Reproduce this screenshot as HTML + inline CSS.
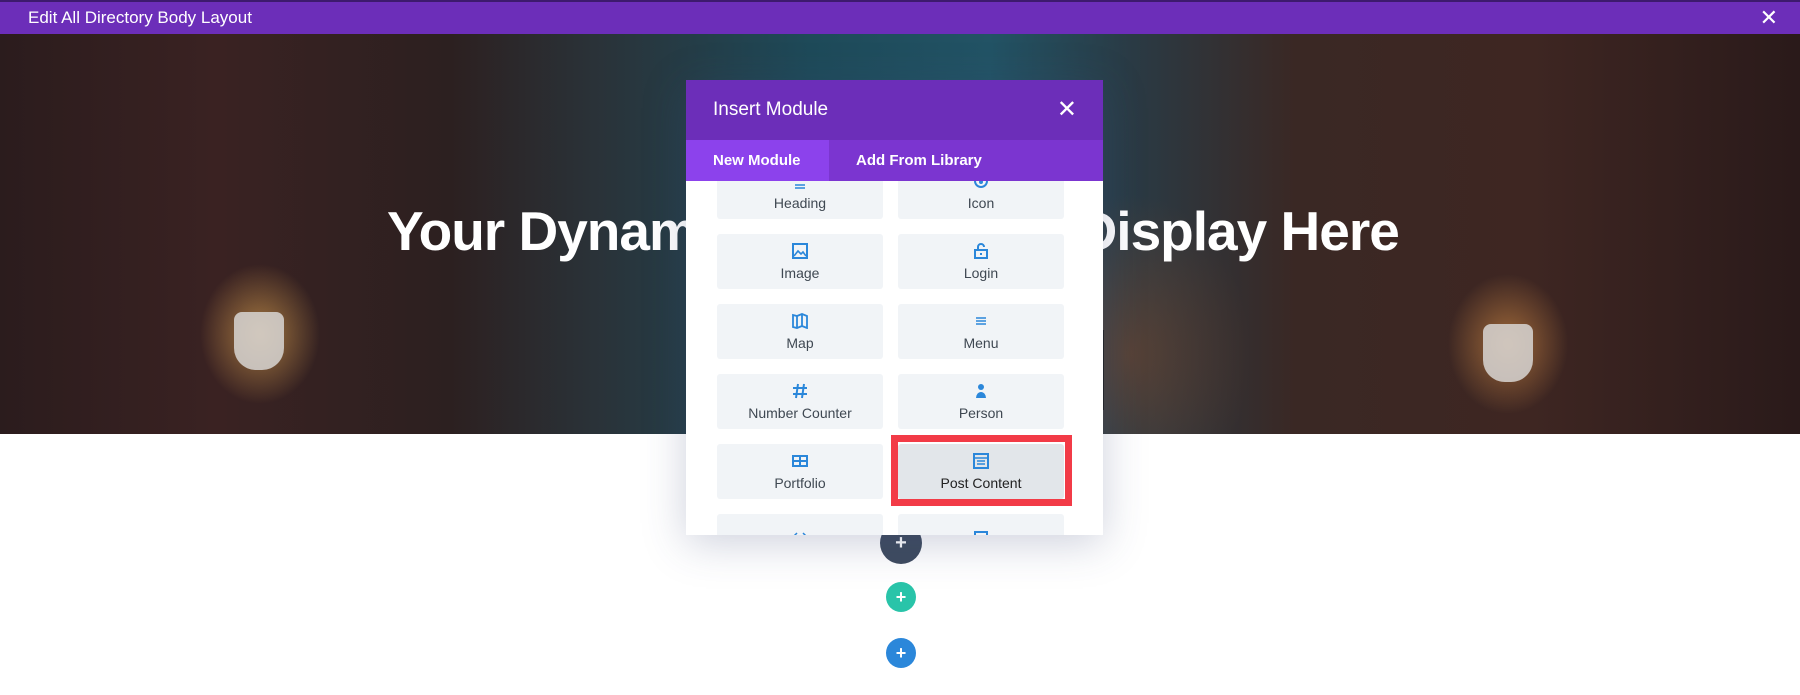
<!DOCTYPE html>
<html><head><meta charset="utf-8"><style>
*{margin:0;padding:0;box-sizing:border-box}
body{width:1800px;height:695px;overflow:hidden;background:#fff;font-family:"Liberation Sans",sans-serif;position:relative}
.bar{position:absolute;left:0;top:0;width:1800px;height:34px;background:#6c2eb9;border-top:2px solid #3d1a6e;color:#fff;font-size:17px;line-height:32px;padding-left:28px}
.bar .x{position:absolute;right:22px;top:0;font-size:22px}
.hero{position:absolute;left:0;top:34px;width:1800px;height:400px;overflow:hidden;
background:
radial-gradient(ellipse 60px 70px at 260px 300px,rgba(255,190,90,.55),transparent),
radial-gradient(ellipse 60px 70px at 1508px 310px,rgba(255,170,80,.5),transparent),
radial-gradient(ellipse 120px 160px at 1130px 320px,rgba(170,80,30,.35),transparent),
linear-gradient(90deg,#2b1c1d 0%,#3a2222 12%,#2c2020 25%,#2a3238 33%,#1e4a59 45%,#225365 55%,#2a3a44 63%,#3a2824 72%,#3e2622 85%,#2a1a1a 100%)}
.hero .lamp{position:absolute;width:50px;height:58px;background:#d8d6d4;border-radius:8px 8px 22px 22px;opacity:.85}
.hero h1{position:absolute;left:387px;top:165px;font-size:55px;font-weight:bold;color:#fff;white-space:nowrap;letter-spacing:-1px}
.modal{position:absolute;left:686px;top:80px;width:417px;height:455px;background:#fff;box-shadow:0 8px 40px rgba(60,70,120,.25);overflow:hidden}
.mh{position:relative;z-index:2;height:60px;background:#6c2eb9;color:#fff;font-size:19px;line-height:60px;padding-left:27px}
.mh .x{position:absolute;right:26px;top:0;font-size:24px}
.tabs{position:relative;z-index:2;height:41px;background:#7b35d0;color:#fff;font-size:15px;line-height:41px;font-weight:bold}
.tabs .a{position:absolute;left:0;top:0;width:143px;height:41px;background:#8c42ec;padding-left:27px}
.tabs .b{position:absolute;left:170px}
.card{position:absolute;width:166px;height:55px;background:#f1f4f7;border-radius:3px;text-align:center;color:#3f4852;font-size:14px}
.card .t{position:absolute;left:0;right:0;top:31px}
.card svg{position:absolute;left:75px;top:9px}
.red{position:absolute;left:205px;top:355px;width:181px;height:71px;border:7px solid #f23b47}
.dot{position:absolute;border-radius:50%;color:#fff;text-align:center;font-weight:bold}
</style></head><body>
<div class="bar">Edit All Directory Body Layout<span class="x">✕</span></div>
<div class="hero">
<div class="lamp" style="left:234px;top:278px"></div>
<div class="lamp" style="left:1483px;top:290px"></div>
<h1>Your Dynamic Content Will Display Here</h1>
</div>
<div style="position:absolute;left:1096px;top:330px;width:8px;height:80px;background:#222"></div>
<div class="dot" style="left:880px;top:522px;width:42px;height:42px;background:#3e4b5f;line-height:42px;font-size:20px">+</div>
<div class="dot" style="left:886px;top:582px;width:30px;height:30px;background:#29c4a9;line-height:30px;font-size:18px">+</div>
<div class="dot" style="left:886px;top:638px;width:30px;height:30px;background:#2b87da;line-height:30px;font-size:18px">+</div>
<div class="modal">
<div class="mh">Insert Module<span class="x">✕</span></div>
<div class="tabs"><span class="a">New Module</span><span class="b">Add From Library</span></div>
<div class="card" style="left:31px;top:84px"><svg width="16" height="16" viewBox="0 0 16 16"><path d="M3 12h10M3 15h10" stroke="#2b87da" stroke-width="1.5"/></svg><div class="t">Heading</div></div>
<div class="card" style="left:212px;top:84px"><svg width="16" height="16" viewBox="0 0 16 16"><circle cx="8" cy="8" r="6" fill="none" stroke="#2b87da" stroke-width="2"/><circle cx="8" cy="9" r="2" fill="#2b87da"/></svg><div class="t">Icon</div></div>
<div class="card" style="left:31px;top:154px"><svg width="16" height="16" viewBox="0 0 16 16"><rect x="1" y="1" width="14" height="14" fill="none" stroke="#2b87da" stroke-width="2"/><path d="M2 13l4-5 3 3 2-2 3 4" fill="none" stroke="#2b87da" stroke-width="1.6"/></svg><div class="t">Image</div></div>
<div class="card" style="left:212px;top:154px"><svg width="16" height="16" viewBox="0 0 16 16"><path d="M5 7V4a3 3 0 0 1 6 0" fill="none" stroke="#2b87da" stroke-width="2"/><rect x="2" y="7" width="12" height="8" fill="none" stroke="#2b87da" stroke-width="2"/><rect x="7" y="10" width="2" height="2" fill="#2b87da"/></svg><div class="t">Login</div></div>
<div class="card" style="left:31px;top:224px"><svg width="16" height="16" viewBox="0 0 16 16"><path d="M1 2l4 1 5-2 5 2v12l-5-2-5 2-4-1z M5 3v12 M10 1v12" fill="none" stroke="#2b87da" stroke-width="1.8"/></svg><div class="t">Map</div></div>
<div class="card" style="left:212px;top:224px"><svg width="16" height="16" viewBox="0 0 16 16"><path d="M3 5h10M3 8h10M3 11h10" stroke="#2b87da" stroke-width="1.5"/></svg><div class="t">Menu</div></div>
<div class="card" style="left:31px;top:294px"><svg width="16" height="16" viewBox="0 0 16 16"><path d="M6 1L4 15M12 1l-2 14M1 5h14M1 11h14" stroke="#2b87da" stroke-width="2"/></svg><div class="t">Number Counter</div></div>
<div class="card" style="left:212px;top:294px"><svg width="16" height="16" viewBox="0 0 16 16"><circle cx="8" cy="4" r="3" fill="#2b87da"/><path d="M3 15a5 6 0 0 1 10 0z" fill="#2b87da"/></svg><div class="t">Person</div></div>
<div class="card" style="left:31px;top:364px"><svg width="16" height="16" viewBox="0 0 16 16"><rect x="1" y="3" width="14" height="10" fill="none" stroke="#2b87da" stroke-width="2"/><path d="M1 8h14M8 3v10" stroke="#2b87da" stroke-width="2"/></svg><div class="t">Portfolio</div></div>
<div class="card" style="left:212px;top:364px;background:#e2e6ea;color:#222"><svg width="16" height="16" viewBox="0 0 16 16"><rect x="1" y="1" width="14" height="14" fill="none" stroke="#2b87da" stroke-width="2"/><path d="M1 5h14M4 8h8M4 11h8" stroke="#2b87da" stroke-width="1.5"/></svg><div class="t">Post Content</div></div>
<div class="red"></div>
<div class="card" style="left:31px;top:434px"><svg width="16" height="16" viewBox="0 0 16 16"><path d="M5 10l-3 3 3 3M11 10l3 3-3 3" fill="none" stroke="#2b87da" stroke-width="1.5"/></svg></div>
<div class="card" style="left:212px;top:434px"><svg width="16" height="16" viewBox="0 0 16 16"><rect x="2" y="9" width="12" height="10" fill="none" stroke="#2b87da" stroke-width="2"/><path d="M5 13h6" stroke="#2b87da" stroke-width="1.5"/></svg></div>
</div>
</body></html>
